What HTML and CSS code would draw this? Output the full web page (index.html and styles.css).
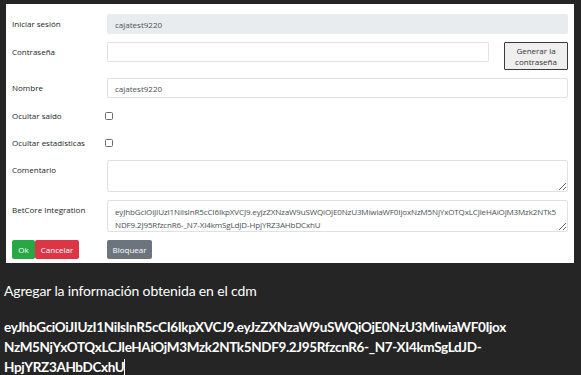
FILE: index.html
```html
<!DOCTYPE html>
<html lang="es">
<head>
    <meta charset="UTF-8">
    <meta name="viewport" content="width=device-width, initial-scale=1.0">
    <title>Usuario</title>
    <link rel="stylesheet" href="styles.css">
</head>
<body>
    <div class="panel">
        <div class="row">
            <label class="row__label">Iniciar sesión</label>
            <input class="field field--readonly" type="text" value="cajatest9220" readonly>
        </div>
        <div class="row">
            <label class="row__label">Contraseña</label>
            <input class="field field--short" type="password">
            <button class="btn-generate">Generar la<br>contraseña</button>
        </div>
        <div class="row">
            <label class="row__label">Nombre</label>
            <input class="field" type="text" value="cajatest9220">
        </div>
        <div class="row row--check">
            <label class="row__label">Ocultar saldo</label>
            <span class="check"></span>
        </div>
        <div class="row row--check">
            <label class="row__label">Ocultar estadísticas</label>
            <span class="check"></span>
        </div>
        <div class="row">
            <label class="row__label">Comentario</label>
            <textarea class="field field--area"></textarea>
        </div>
        <div class="row">
            <label class="row__label">BetCore Integration</label>
            <textarea class="field field--area">eyJhbGciOiJIUzI1NiIsInR5cCI6IkpXVCJ9.eyJzZXNzaW9uSWQiOjE0NzU3MiwiaWF0IjoxNzM5NjYxOTQxLCJleHAiOjM3Mzk2NTk5NDF9.2J95RfzcnR6-_N7-XI4kmSgLdJD-HpjYRZ3AHbDCxhU</textarea>
        </div>
        <div class="row row--actions">
            <div class="actions__left">
                <button class="btn btn--ok">Ok</button><button class="btn btn--cancel">Cancelar</button>
            </div>
            <button class="btn btn--block">Bloquear</button>
        </div>
    </div>

    <p class="note">Agregar la información obtenida en el cdm</p>
    <p class="token">eyJhbGciOiJIUzI1NiIsInR5cCI6IkpXVCJ9.eyJzZXNzaW9uSWQiOjE0NzU3MiwiaWF0Ijox<br>NzM5NjYxOTQxLCJleHAiOjM3Mzk2NTk5NDF9.2J95RfzcnR6-_N7-XI4kmSgLdJD-<br>HpjYRZ3AHbDCxhU<span class="caret"></span></p>
</body>
</html>
```

FILE: styles.css
```css
body {
    margin: 0;
    padding: 4px 0 0 0;
    background-color: #252526;
    font-family: "Open Sans", "Noto Sans", sans-serif;
}

.panel {
    margin: 0 7px 0 6px;
    height: 259px;
    box-sizing: border-box;
    background-color: #ffffff;
    padding: 10px 6px 0 6px;
    display: flex;
    flex-direction: column;
    gap: 8px;
}

.row {
    display: flex;
    align-items: flex-start;
}

.row__label {
    width: 95px;
    flex-shrink: 0;
    font-size: 8px;
    line-height: 20px;
    color: #212529;
}

.field {
    flex: 1;
    height: 20px;
    box-sizing: border-box;
    border: 1px solid #dfe2e5;
    border-radius: 2px;
    padding: 0 7px;
    font-family: "Open Sans", "Noto Sans", sans-serif;
    font-size: 8px;
    color: #495057;
    background-color: #ffffff;
    outline: none;
}

.field--readonly {
    background-color: #e9ecef;
    border-color: #e9ecef;
}

.field--short {
    flex: 0 0 382px;
}

.btn-generate {
    margin-left: 15px;
    width: 64px;
    height: 28px;
    padding: 0;
    background-color: #efefef;
    border: 1px solid #3a3a3a;
    border-radius: 1px;
    font-family: "Open Sans", "Noto Sans", sans-serif;
    font-size: 8px;
    line-height: 11px;
    color: #333333;
}

.row--check {
    align-items: center;
    height: 19px;
}

.check {
    width: 6px;
    height: 6px;
    border: 1px solid #6b6b6b;
    border-radius: 1.5px;
    margin-left: -2px;
}

.field--area {
    height: 32px;
    padding: 4px 7px 0 7px;
    line-height: 13px;
    letter-spacing: -0.13px;
    resize: vertical;
    overflow: hidden;
    word-break: break-all;
}

.row--actions {
    align-items: stretch;
}

.actions__left {
    width: 95px;
    display: flex;
}

.btn {
    height: 19px;
    border: none;
    border-radius: 2px;
    padding: 0;
    font-family: "Open Sans", "Noto Sans", sans-serif;
    font-size: 8px;
    color: #ffffff;
}

.btn--ok {
    width: 23px;
    background-color: #28a745;
}

.btn--cancel {
    width: 44px;
    background-color: #dc3545;
}

.btn--block {
    width: 45px;
    background-color: #6c757d;
}

.note {
    margin: 19px 0 0 4px;
    font-family: "Lato", sans-serif;
    font-size: 14px;
    letter-spacing: -0.15px;
    color: #ffffff;
}

.token {
    margin: 18px 0 0 4px;
    font-family: "Lato", sans-serif;
    font-weight: bold;
    font-size: 13.5px;
    letter-spacing: -0.35px;
    line-height: 20px;
    color: #ffffff;
}

.caret {
    display: inline-block;
    width: 1px;
    height: 17px;
    background-color: #ffffff;
    vertical-align: -4px;
}
```
